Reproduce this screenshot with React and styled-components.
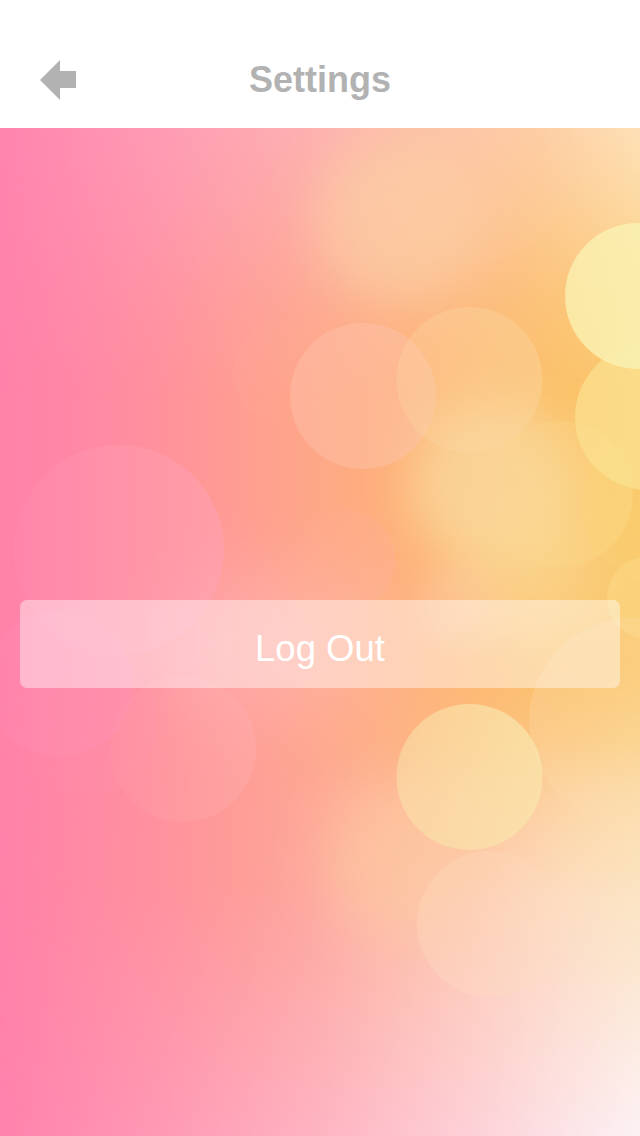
import React from "react";
import styled, { createGlobalStyle } from "styled-components";

const GlobalStyle = createGlobalStyle`
  * { box-sizing: border-box; }
  body { margin: 0; font-family: "Liberation Sans", Arial, sans-serif; background: #fff; }
`;

const Screen = styled.div`
  width: 640px;
  height: 1136px;
  display: flex;
  flex-direction: column;
  overflow: hidden;
`;

const Header = styled.header`
  height: 128px;
  flex: none;
  padding: 32px 40px 0;
  display: grid;
  grid-template-columns: 36px 1fr 36px;
  align-items: center;
  background: #fff;
  color: #b2b2b2;
`;

const BackButton = styled.button`
  width: 36px;
  height: 40px;
  padding: 0;
  border: 0;
  background: none;
  color: inherit;
  svg { display: block; }
`;

const Title = styled.h1`
  margin: 0;
  text-align: center;
  font-size: 36px;
  line-height: 42px;
  font-weight: 700;
`;

const Content = styled.main`
  position: relative;
  isolation: isolate;
  flex: 1;
  padding: 472px 20px 0;
`;

const Backdrop = styled.svg`
  position: absolute;
  inset: 0;
  z-index: -1;
  display: block;
`;

const ActionButton = styled.button`
  display: flex;
  align-items: center;
  justify-content: center;
  width: 100%;
  height: 88px;
  padding: 10px 0 0;
  border: 0;
  border-radius: 7px;
  background: rgba(255, 255, 255, 0.42);
  color: #fff;
  font-family: inherit;
  font-size: 36.5px;
  line-height: 42px;
`;

const bands = {
  middle: [[0, "#ff82a9"], [12, "#ff88a6"], [25, "#ff919c"], [37.5, "#ff9d92"], [50, "#fea887"], [62.5, "#feb078"], [75, "#fdb970"], [87.5, "#fbc167"], [100, "#fac96c"]],
  top: [[0, "#ff84ae"], [25, "#ff9bb4"], [50, "#fdb2b0"], [66, "#fdc0a8"], [84, "#fdcda4"], [100, "#fee0b6"]],
  lower: [[0, "#ff82a9"], [25, "#ff929e"], [37.5, "#fe9d99"], [50, "#fdaa9f"], [62.5, "#fdbda6"], [75, "#fdcdb4"], [87.5, "#fddac0"], [100, "#fce3c6"]],
  bottom: [[0, "#ff82ac"], [25, "#ff99b5"], [50, "#feb4c2"], [75, "#fdd2d9"], [88, "#fce3e7"], [100, "#fcf1f4"]],
};

const fades = {
  top: [[128, 1], [200, 0.75], [300, 0.3], [400, 0]],
  lower: [[660, 0], [740, 0.25], [800, 0.65], [900, 1]],
  bottom: [[880, 0], [960, 0.28], [1050, 0.65], [1136, 1]],
};

const glows = [
  [400, 220, 84, "#fbd0a6", 0.65, 24],
  [495, 485, 86, "#f9dba2", 0.75, 25],
  [535, 575, 68, "#fadb98", 0.55, 26],
  [458, 605, 42, "#fcd0ac", 0.4, 14],
  [245, 650, 85, "#ffb0bb", 0.45, 32],
  [340, 640, 85, "#feb8a4", 0.4, 34],
  [400, 862, 74, "#fdcba2", 0.55, 26],
  [660, 870, 110, "#fbe6be", 0.3, 42],
];

// Each disc: centre x, centre y, radius, colour, opacity at its left and right edges.
const discs = [
  [467, 156, 108, "#ffd0a8", 0, 0.12],
  [284, 372, 51, "#ffb59a", 0.12, 0],
  [363, 396, 73, "#fdc3ac", 0.42, 0.48],
  [469.5, 380, 73, "#fbd6a0", 0.34, 0.42],
  [560, 494, 73, "#fadf90", 0, 0.36],
  [655, 508, 73, "#fbd878", 0.2, 0.2],
  [648, 417, 73, "#fbe392", 0.65, 0.78],
  [638, 296, 73, "#faf0b0", 0.8, 1],
  [345, 560, 50, "#ffafa4", 0.05, 0.25],
  [119, 550, 105, "#ffa3bb", 0.08, 0.46],
  [60, 684, 73, "#ff93b9", 0.1, 0.44],
  [85, 720, 73, "#ff90ac", 0.05, 0.3],
  [183, 749, 73, "#ffaeb0", 0.08, 0.4],
  [648, 598, 41, "#fcdc8c", 0.45, 0.5],
  [633, 722, 104, "#fddcb0", 0.28, 0.25],
  [469.5, 777, 73, "#fae3aa", 0.54, 0.82],
  [490, 924, 73, "#fddfc0", 0.3, 0.18],
];

function Bokeh() {
  return (
    <Backdrop width="640" height="1008" viewBox="0 128 640 1008" aria-hidden="true">
      <defs>
        {Object.entries(bands).map(([name, stops]) => (
          <linearGradient key={name} id={`band-${name}`}>
            {stops.map(([offset, color]) => <stop key={offset} offset={`${offset}%`} stopColor={color} />)}
          </linearGradient>
        ))}
        {Object.entries(fades).map(([name, stops]) => (
          <React.Fragment key={name}>
            <linearGradient id={`fade-${name}`} x1="0" y1="0" x2="0" y2="1">
              {stops.map(([y, opacity]) => (
                <stop key={y} offset={(y - 128) / 1008} stopColor="#fff" stopOpacity={opacity} />
              ))}
            </linearGradient>
            <mask id={`mask-${name}`} maskUnits="userSpaceOnUse" x="0" y="128" width="640" height="1008">
              <rect y="128" width="640" height="1008" fill={`url(#fade-${name})`} />
            </mask>
          </React.Fragment>
        ))}
        {glows.map(([, , , , , blur], i) => (
          <filter key={i} id={`blur-${i}`} x="-80%" y="-80%" width="260%" height="260%" colorInterpolationFilters="sRGB">
            <feGaussianBlur stdDeviation={blur} />
          </filter>
        ))}
        {discs.map(([, , , color, left, right], i) => (
          <linearGradient key={i} id={`disc-${i}`}>
            <stop offset="0" stopColor={color} stopOpacity={left} />
            <stop offset="1" stopColor={color} stopOpacity={right} />
          </linearGradient>
        ))}
      </defs>
      <rect y="128" width="640" height="1008" fill="url(#band-middle)" />
      {Object.keys(fades).map((name) => (
        <rect key={name} y="128" width="640" height="1008" fill={`url(#band-${name})`} mask={`url(#mask-${name})`} />
      ))}
      {glows.map(([cx, cy, r, fill, opacity], i) => (
        <circle key={i} cx={cx} cy={cy} r={r} fill={fill} opacity={opacity} filter={`url(#blur-${i})`} />
      ))}
      {discs.map(([cx, cy, r], i) => (
        <circle key={i} cx={cx} cy={cy} r={r} fill={`url(#disc-${i})`} />
      ))}
    </Backdrop>
  );
}

export default function App() {
  return (
    <Screen>
      <GlobalStyle />
      <Header>
        <BackButton aria-label="Back">
          <svg width="36" height="40" viewBox="0 0 36 40">
            <path d="M0 20L20 0V11H36V28H20V40Z" fill="currentColor" />
          </svg>
        </BackButton>
        <Title>Settings</Title>
      </Header>
      <Content>
        <Bokeh />
        <ActionButton>Log Out</ActionButton>
      </Content>
    </Screen>
  );
}
